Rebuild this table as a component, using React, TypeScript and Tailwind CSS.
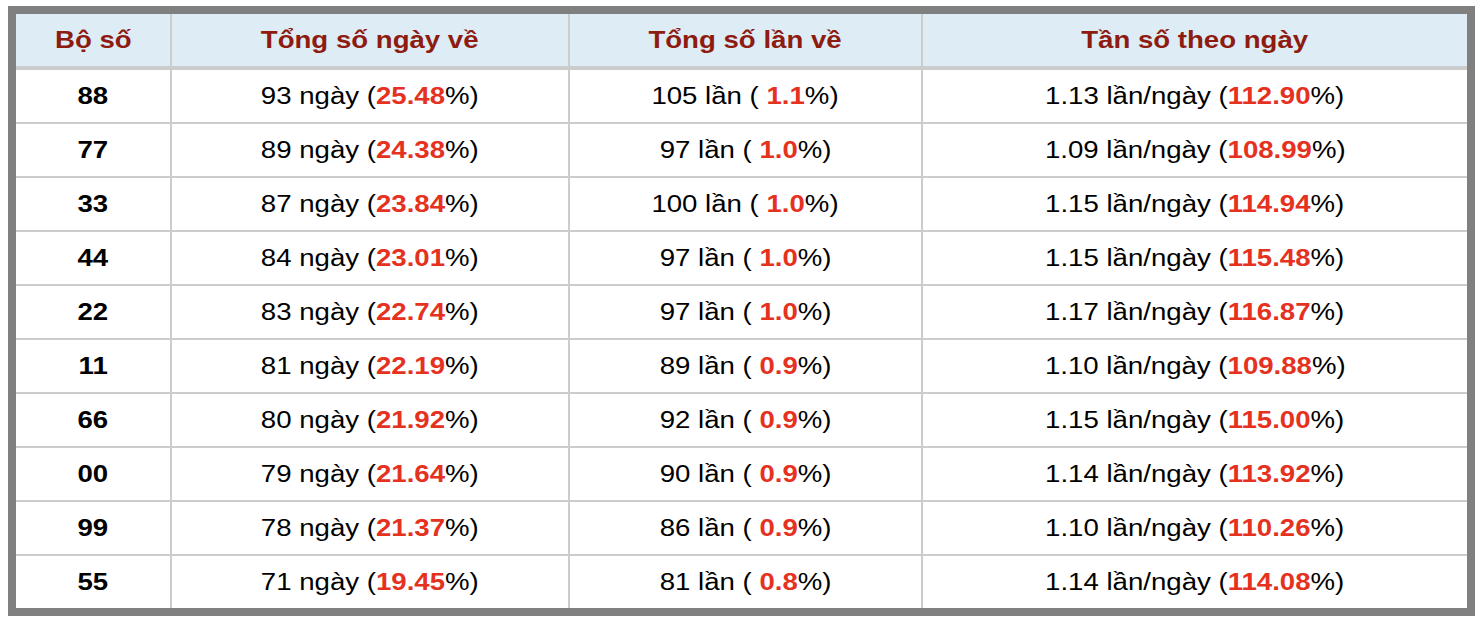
import React from "react";

const rows: [string, string, string, string, string, string, string][] = [
  ["88", "93", "25.48", "105", "1.1", "1.13", "112.90"],
  ["77", "89", "24.38", "97", "1.0", "1.09", "108.99"],
  ["33", "87", "23.84", "100", "1.0", "1.15", "114.94"],
  ["44", "84", "23.01", "97", "1.0", "1.15", "115.48"],
  ["22", "83", "22.74", "97", "1.0", "1.17", "116.87"],
  ["11", "81", "22.19", "89", "0.9", "1.10", "109.88"],
  ["66", "80", "21.92", "92", "0.9", "1.15", "115.00"],
  ["00", "79", "21.64", "90", "0.9", "1.14", "113.92"],
  ["99", "78", "21.37", "86", "0.9", "1.10", "110.26"],
  ["55", "71", "19.45", "81", "0.8", "1.14", "114.08"],
];

function T({ children }: { children: React.ReactNode }) {
  return <span className="inline-block scale-x-[1.2] whitespace-pre">{children}</span>;
}

function H({ children }: { children: React.ReactNode }) {
  return <span className="inline-block scale-x-[1.15] whitespace-pre">{children}</span>;
}

function Red({ children }: { children: React.ReactNode }) {
  return <b className="font-bold text-[#e5321f]">{children}</b>;
}

const grid = "grid grid-cols-[154px_396px_351px_544px] gap-x-[2px]";
const cell = "flex items-center justify-center";

export default function App() {
  return (
    <div className="pl-[8px] pt-[6px] bg-white min-h-[626px]" style={{ fontFamily: '"Liberation Sans", Arial, sans-serif' }}>
      <div className="w-[1467px] border-[8px] border-[#808080] bg-[#cccccc] flex flex-col gap-[2px]">
        <div className={`${grid} h-[52px] mb-[2px] text-[24px] font-bold text-[#8e1b10]`}>
          {["Bộ số", "Tổng số ngày về", "Tổng số lần về", "Tần số theo ngày"].map((h) => (
            <div key={h} className={`${cell} bg-[#ddecf5]`}>
              <H>{h}</H>
            </div>
          ))}
        </div>
        {rows.map((r) => (
          <div key={r[0]} className={`${grid} h-[52px] text-[23px] text-black`}>
            <div className={`${cell} bg-white font-bold`}>
              <T>{r[0]}</T>
            </div>
            <div className={`${cell} bg-white`}>
              <T>
                {r[1]} ngày (<Red>{r[2]}</Red>%)
              </T>
            </div>
            <div className={`${cell} bg-white`}>
              <T>
                {r[3]} lần ( <Red>{r[4]}</Red>%)
              </T>
            </div>
            <div className={`${cell} bg-white`}>
              <T>
                {r[5]} lần/ngày (<Red>{r[6]}</Red>%)
              </T>
            </div>
          </div>
        ))}
      </div>
    </div>
  );
}
